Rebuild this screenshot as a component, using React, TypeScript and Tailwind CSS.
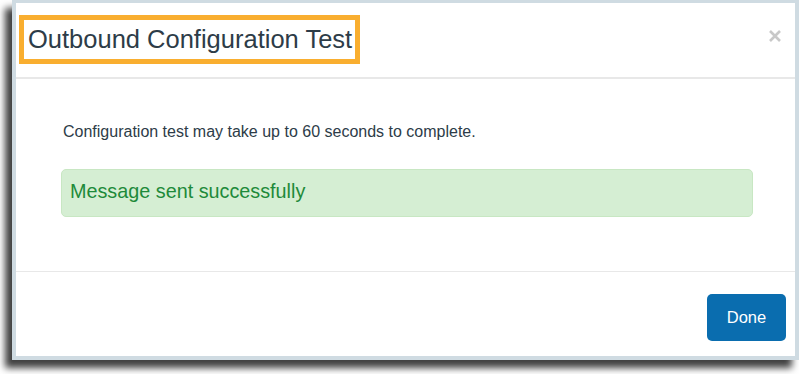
import React from 'react';

const CloseIcon = () => (
  <svg width="14" height="14" viewBox="0 0 14 14" className="block">
    <path d="M2 2 L12 12 M12 2 L2 12" stroke="#c8c8c8" strokeWidth="2.6" strokeLinecap="butt" />
  </svg>
);

export default function App() {
  return (
    <div
      className="w-[799px] h-[374px] bg-white pl-3"
      style={{ fontFamily: '"Liberation Sans", Arial, Helvetica, sans-serif' }}
    >
      <div className="h-[360px] flex flex-col bg-white border-[#cfdbe2] border-x-4 border-b-4 border-t-[3px] shadow-[-7px_8px_7px_rgba(0,0,0,0.75)]">
        {/* header */}
        <div className="h-[76px] shrink-0 flex items-start justify-between border-b-2 border-[#e8e8e8] pl-[3px] pr-[13px] pt-[12px]">
          <span className="border-[5px] border-[#f9ae2f] pl-[4px] pr-[3px] h-[49px] flex items-center text-[25.5px] text-[#2d3c48]">
            Outbound Configuration Test
          </span>
          <button className="mt-[14px]">
            <CloseIcon />
          </button>
        </div>

        {/* body */}
        <div className="flex-1 pl-[45px] pr-[42px] pt-[41px]">
          <p className="text-[16px] leading-[24px] text-[#2d3c48] pl-[2px]">Configuration test may take up to 60 seconds to complete.</p>
          <div className="mt-[25px] h-[48px] rounded-[5px] bg-[#d5eed3] border border-[#c8e7c3] flex items-center pl-[8px] pb-[2px]">
            <span className="text-[19.8px] text-[#1e8a3a]">Message sent successfully</span>
          </div>
        </div>

        {/* footer */}
        <div className="h-[85px] shrink-0 border-t border-[#e8e8e8] flex justify-end items-start pt-[22px] pr-[9px]">
          <button className="w-[79px] h-[47px] rounded-[5px] bg-[#0a6daf] text-white text-[16.5px]">Done</button>
        </div>
      </div>
    </div>
  );
}
